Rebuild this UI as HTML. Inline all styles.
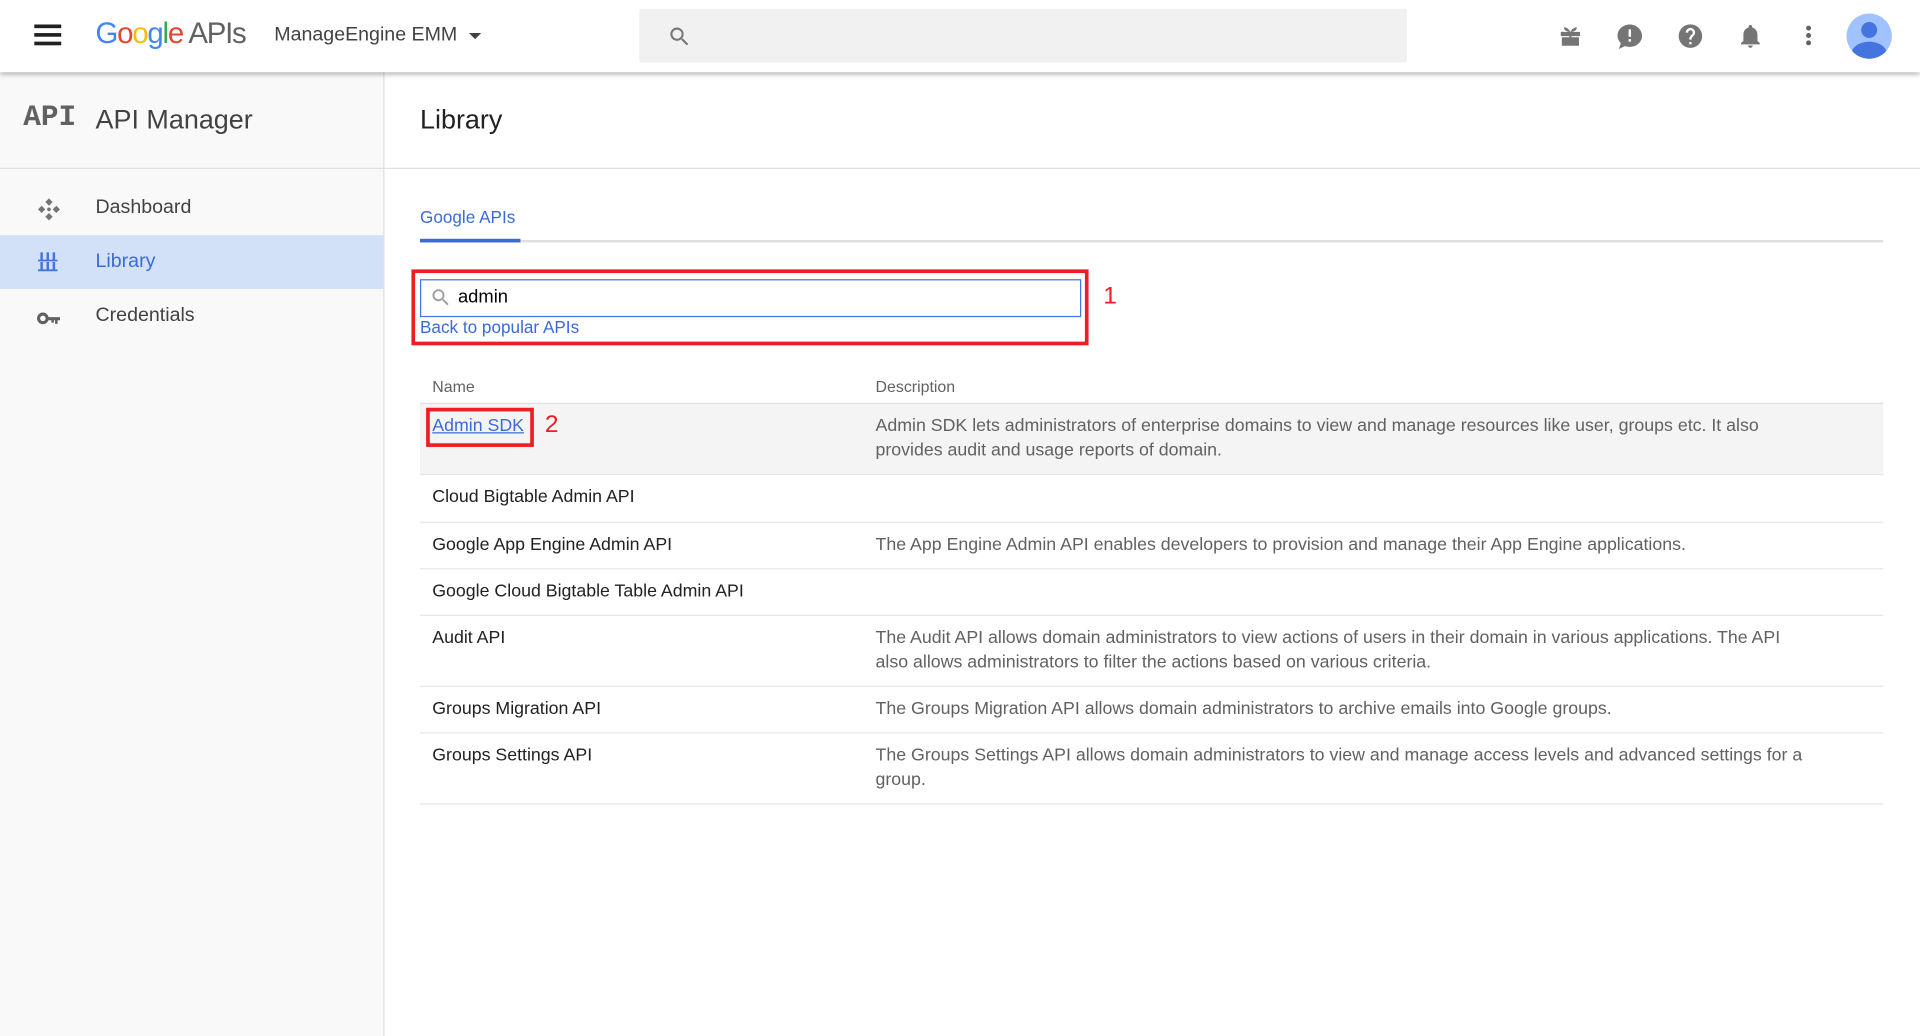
<!DOCTYPE html>
<html><head><meta charset="utf-8"><style>
html,body{margin:0;padding:0;width:1920px;height:1036px;overflow:hidden;background:#fff;}
#w{position:absolute;left:0;top:0;width:1568px;height:846px;transform:scale(1.22449);transform-origin:0 0;font-family:"Liberation Sans",sans-serif;color:#212121;}
.a{position:absolute;white-space:nowrap;}
#hdr{position:absolute;left:0;top:0;width:1568px;height:59px;background:#fff;box-shadow:0 2px 4px rgba(0,0,0,.3);z-index:5;}
#side{position:absolute;left:0;top:59px;width:313px;height:787px;background:#f9f9f9;border-right:1px solid #e0e0e0;}
.row{position:absolute;left:343px;width:1195px;border-bottom:1px solid #e6e6e6;font-size:14.5px;line-height:20px;}
.row .n{position:absolute;left:10px;top:8px;color:#212121;}
.row .d{position:absolute;left:372px;top:8px;color:#616161;line-height:20px;width:760px;white-space:normal;}
</style></head><body><div id="w">
<div id="hdr">
 <div class="a" style="left:28px;top:20px;width:22px;height:3px;background:#212121;box-shadow:0 7px 0 #212121,0 14px 0 #212121"></div>
 <div class="a" style="left:78px;top:14px;font-size:24px;letter-spacing:-1px"><span style="color:#4285f4">G</span><span style="color:#ea4335">o</span><span style="color:#fbbc05">o</span><span style="color:#4285f4">g</span><span style="color:#34a853">l</span><span style="color:#ea4335">e</span> <span style="color:#616161">APIs</span></div>
 <div class="a" style="left:224px;top:20px;font-size:16px;color:#424242">ManageEngine EMM</div>
 <div class="a" style="left:383px;top:27px;width:0;height:0;border-left:5px solid transparent;border-right:5px solid transparent;border-top:5px solid #424242"></div>
 <div class="a" style="left:522px;top:7px;width:627px;height:44px;background:#f1f1f1;border-radius:2px"></div>
 <svg class="a" style="left:545px;top:20px" width="20" height="20" viewBox="0 0 24 24"><path fill="#757575" d="M15.5 14h-.8l-.3-.3A6.5 6.5 0 1 0 9.5 16a6.5 6.5 0 0 0 4.2-1.6l.3.3v.8l5 5 1.5-1.5-5-5zm-6 0a4.5 4.5 0 1 1 0-9 4.5 4.5 0 0 1 0 9z"/></svg>
 <svg class="a" style="left:1272px;top:19px" width="21" height="21" viewBox="0 0 24 24"><path fill="#757575" d="M3 8h18v4H3zM4 13h7v8H4zM13 13h7v8h-7zM11 8h2v13h-2zM6 4c2-1 5 2 6 4-3 0-6-1-6-4zM18 4c-2-1-5 2-6 4 3 0 6-1 6-4z"/></svg>
 <svg class="a" style="left:1319px;top:18px" width="24" height="24" viewBox="0 0 24 24"><path fill="#757575" d="M12 2C6.5 2 2 6 2 11c0 2.5 1 4.6 2.7 6.2L3 22l5-2.3c1.2.4 2.6.6 4 .6 5.5 0 10-4 10-9S17.5 2 12 2zm1 14h-2v-2h2zm0-4h-2V6h2z"/></svg>
 <svg class="a" style="left:1369px;top:18px" width="23" height="23" viewBox="0 0 24 24"><path fill="#757575" d="M12 2a10 10 0 1 0 0 20 10 10 0 0 0 0-20zm1 17h-2v-2h2zm2.1-7.7-.9.9C13.5 12.9 13 13.5 13 15h-2v-.5c0-1.1.5-2.1 1.2-2.8l1.2-1.3A2 2 0 1 0 10 9H8a4 4 0 1 1 8 0c0 .9-.4 1.7-.9 2.3z"/></svg>
 <svg class="a" style="left:1418px;top:18px" width="23" height="23" viewBox="0 0 24 24"><path fill="#757575" d="M12 22a2 2 0 0 0 2-2h-4a2 2 0 0 0 2 2zm6-6v-5c0-3.1-1.6-5.6-4.5-6.3V4a1.5 1.5 0 0 0-3 0v.7C7.6 5.4 6 7.9 6 11v5l-2 2v1h16v-1z"/></svg>
 <div class="a" style="left:1475px;top:21px;width:4px;height:4px;border-radius:2px;background:#616161;box-shadow:0 6px 0 #616161,0 12px 0 #616161"></div>
 <div class="a" style="left:1508px;top:11px;width:37px;height:37px;border-radius:50%;background:#a0c3ff;overflow:hidden">
  <div class="a" style="left:12px;top:7px;width:13px;height:13px;border-radius:50%;background:#4374e0"></div>
  <div class="a" style="left:4px;top:23px;width:29px;height:20px;border-radius:50%;background:#4374e0"></div>
 </div>
</div>
<div id="side">
 <div class="a" style="left:0;top:78px;width:313px;height:1px;background:#e0e0e0"></div>
 <div class="a" style="left:19px;top:24px;font-family:'Liberation Mono',monospace;font-weight:bold;font-size:24px;color:#616161">API</div>
 <div class="a" style="left:78px;top:26px;font-size:22px;color:#424242">API Manager</div>
 <svg class="a" style="left:30px;top:102px" width="20" height="20" viewBox="0 0 20 20"><path fill="#757575" d="M10 1l3 3-3 3-3-3zM10 13l3 3-3 3-3-3zM1 10l3-3 3 3-3 3zM13 10l3-3 3 3-3 3z"/><circle cx="10" cy="10" r="1.5" fill="#757575"/></svg>
 <div class="a" style="left:78px;top:102px;font-size:16px;color:#424242">Dashboard</div>
 <div class="a" style="left:0;top:133px;width:313px;height:44px;background:#d3e1f8"></div>
 <svg class="a" style="left:31px;top:147px" width="16" height="16" viewBox="0 0 16 16"><path fill="#4374e0" d="M2 0h2v6H2zM7 0h2v6H7zM12 0h2v6h-2zM0 6h16v1.5H0zM2 8h2v6H2zM7 8h2v6H7zM12 8h2v6h-2zM0 14h16v1.5H0z"/></svg>
 <div class="a" style="left:78px;top:146px;font-size:16px;color:#3b6bd6">Library</div>
 <svg class="a" style="left:30px;top:194px" width="20" height="14" viewBox="0 0 20 14"><circle cx="5" cy="7" r="3.5" fill="none" stroke="#616161" stroke-width="2.5"/><path fill="#616161" d="M8 6h11v2.5h-2v3h-2v-3h-1v2h-2v-2H8z"/></svg>
 <div class="a" style="left:78px;top:190px;font-size:16px;color:#424242">Credentials</div>
</div>
<div class="a" style="left:314px;top:137px;width:1254px;height:1px;background:#e0e0e0"></div>
<div class="a" style="left:343px;top:85px;font-size:22px;color:#212121">Library</div>
<div class="a" style="left:343px;top:169px;font-size:14px;color:#3b6bd6">Google APIs</div>
<div class="a" style="left:343px;top:196px;width:1195px;height:2px;background:#e0e0e0"></div>
<div class="a" style="left:343px;top:195px;width:82px;height:3px;background:#3b6bd6"></div>
<div class="a" style="left:336px;top:220px;width:547px;height:56px;border:3px solid #ee1c25;"></div>
<div class="a" style="left:343px;top:228px;width:538px;height:29px;border:1px solid #4374e0;background:#fff"></div>
<svg class="a" style="left:351px;top:234px" width="18" height="18" viewBox="0 0 24 24"><path fill="#9e9e9e" d="M15.5 14h-.8l-.3-.3A6.5 6.5 0 1 0 9.5 16a6.5 6.5 0 0 0 4.2-1.6l.3.3v.8l5 5 1.5-1.5-5-5zm-6 0a4.5 4.5 0 1 1 0-9 4.5 4.5 0 0 1 0 9z"/></svg>
<div class="a" style="left:374px;top:234px;font-size:15px;color:#000">admin</div>
<div class="a" style="left:343px;top:259px;font-size:14px;color:#3b6bd6">Back to popular APIs</div>
<div class="a" style="left:901px;top:231px;font-size:20px;color:#ee1c25">1</div>
<div class="a" style="left:353px;top:308px;font-size:13px;color:#616161">Name</div>
<div class="a" style="left:715px;top:308px;font-size:13px;color:#616161">Description</div>
<div class="a" style="left:343px;top:329px;width:1195px;height:1px;background:#e0e0e0"></div>
<div class="row" style="top:330px;height:57px;background:#f4f4f4"><div class="n" style="color:#3b6bd6;text-decoration:underline">Admin SDK</div><div class="d">Admin SDK lets administrators of enterprise domains to view and manage resources like user, groups etc. It also provides audit and usage reports of domain.</div></div>
<div class="a" style="left:348px;top:333px;width:82px;height:26px;border:3px solid #ee1c25"></div>
<div class="a" style="left:445px;top:336px;font-size:20px;color:#ee1c25">2</div>
<div class="row" style="top:388px;height:38px"><div class="n">Cloud Bigtable Admin API</div></div>
<div class="row" style="top:427px;height:37px"><div class="n">Google App Engine Admin API</div><div class="d">The App Engine Admin API enables developers to provision and manage their App Engine applications.</div></div>
<div class="row" style="top:465px;height:37px"><div class="n">Google Cloud Bigtable Table Admin API</div></div>
<div class="row" style="top:503px;height:57px"><div class="n">Audit API</div><div class="d">The Audit API allows domain administrators to view actions of users in their domain in various applications. The API also allows administrators to filter the actions based on various criteria.</div></div>
<div class="row" style="top:561px;height:37px"><div class="n">Groups Migration API</div><div class="d">The Groups Migration API allows domain administrators to archive emails into Google groups.</div></div>
<div class="row" style="top:599px;height:57px"><div class="n">Groups Settings API</div><div class="d">The Groups Settings API allows domain administrators to view and manage access levels and advanced settings for a group.</div></div>
</div></body></html>
